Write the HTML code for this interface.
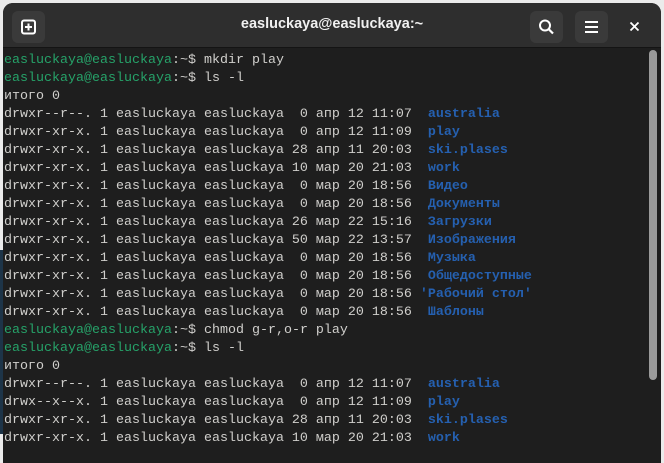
<!DOCTYPE html>
<html><head><meta charset="utf-8"><style>
html,body{margin:0;padding:0;width:664px;height:434px;overflow:hidden;background:#ebebeb;}
.win{position:absolute;left:3px;top:3px;width:658px;height:460px;background:#1e1e1e;border-radius:10px 10px 0 0;overflow:hidden;}
.hdr{position:absolute;left:0;top:0;width:658px;height:44px;background:#2e2e2e;border-bottom:1px solid #141414;}
.btn{position:absolute;top:8px;width:33px;height:32px;background:#3a3a3a;border-radius:6px;}
.title{position:absolute;left:0;width:658px;top:13px;text-align:center;color:#f0f0f0;font:bold 14.5px "Liberation Sans",sans-serif;}
.term{position:absolute;left:1px;top:49px;font:13.33px/18px "Liberation Mono","Noto Sans CJK SC",monospace;color:#d0cfcc;white-space:pre;}
.g{color:#26a269}.b{color:#2560b0;font-weight:bold}
.sb{position:absolute;left:646px;top:47px;width:8px;height:330px;background:#9a9a9a;border-radius:4px;}
</style></head><body>
<div style="position:absolute;left:0;top:250px;width:4px;height:184px;background:#1d3448"></div>
<div class="win">
<div class="hdr">
<div class="btn" style="left:9px"><svg width="33" height="32"><rect x="10" y="9.5" width="13" height="13" rx="2" fill="none" stroke="#fff" stroke-width="2"/><path d="M16.5 12.5v7M13 16h7" stroke="#fff" stroke-width="2"/></svg></div>
<div class="title">easluckaya@easluckaya:~</div>
<div class="btn" style="left:527px"><svg width="33" height="32"><circle cx="15" cy="14.5" r="5" fill="none" stroke="#fff" stroke-width="2"/><path d="M18.5 18l4.5 4.5" stroke="#fff" stroke-width="2.2"/></svg></div>
<div class="btn" style="left:572px"><svg width="33" height="32"><path d="M10 11h13M10 16h13M10 21h13" stroke="#fff" stroke-width="2"/></svg></div>
<svg style="position:absolute;left:626px;top:18px" width="11" height="11"><path d="M1.5 1.5l8 8M9.5 1.5l-8 8" stroke="#fff" stroke-width="1.8"/></svg>
</div>
<div class="term"><span class="g">easluckaya@easluckaya</span>:~$ mkdir play
<span class="g">easluckaya@easluckaya</span>:~$ ls -l
итого 0
drwxr--r--. 1 easluckaya easluckaya  0 апр 12 11:07  <span class="b">australia</span>
drwxr-xr-x. 1 easluckaya easluckaya  0 апр 12 11:09  <span class="b">play</span>
drwxr-xr-x. 1 easluckaya easluckaya 28 апр 11 20:03  <span class="b">ski.plases</span>
drwxr-xr-x. 1 easluckaya easluckaya 10 мар 20 21:03  <span class="b">work</span>
drwxr-xr-x. 1 easluckaya easluckaya  0 мар 20 18:56  <span class="b">Видео</span>
drwxr-xr-x. 1 easluckaya easluckaya  0 мар 20 18:56  <span class="b">Документы</span>
drwxr-xr-x. 1 easluckaya easluckaya 26 мар 22 15:16  <span class="b">Загрузки</span>
drwxr-xr-x. 1 easluckaya easluckaya 50 мар 22 13:57  <span class="b">Изображения</span>
drwxr-xr-x. 1 easluckaya easluckaya  0 мар 20 18:56  <span class="b">Музыка</span>
drwxr-xr-x. 1 easluckaya easluckaya  0 мар 20 18:56  <span class="b">Общедоступные</span>
drwxr-xr-x. 1 easluckaya easluckaya  0 мар 20 18:56 <span class="b">'Рабочий стол'</span>
drwxr-xr-x. 1 easluckaya easluckaya  0 мар 20 18:56  <span class="b">Шаблоны</span>
<span class="g">easluckaya@easluckaya</span>:~$ chmod g-r,o-r play
<span class="g">easluckaya@easluckaya</span>:~$ ls -l
итого 0
drwxr--r--. 1 easluckaya easluckaya  0 апр 12 11:07  <span class="b">australia</span>
drwx--x--x. 1 easluckaya easluckaya  0 апр 12 11:09  <span class="b">play</span>
drwxr-xr-x. 1 easluckaya easluckaya 28 апр 11 20:03  <span class="b">ski.plases</span>
drwxr-xr-x. 1 easluckaya easluckaya 10 мар 20 21:03  <span class="b">work</span></div>
<div class="sb"></div>
</div>
</body></html>
